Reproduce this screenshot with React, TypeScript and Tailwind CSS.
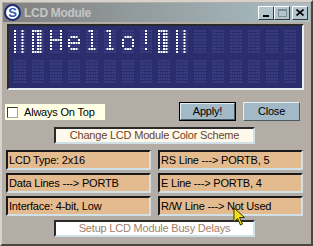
import React from "react";

const G: Record<string, string[]> = {
  A: ["10010", "10010", "10010", "10010", "10010", "10010", "10010", "10010"],
  B: ["11110", "10110", "10110", "10110", "10110", "10110", "10110", "11110"],
  H: ["10001", "10001", "10001", "11111", "10001", "10001", "10001", "00000"],
  e: ["00000", "00000", "01110", "10001", "11111", "10000", "01110", "00000"],
  l: ["01100", "00100", "00100", "00100", "00100", "00100", "01110", "00000"],
  o: ["00000", "00000", "01110", "10001", "10001", "10001", "01110", "00000"],
  "!": ["00100", "00100", "00100", "00100", "00100", "00000", "00100", "00000"],
  " ": ["00000", "00000", "00000", "00000", "00000", "00000", "00000", "00000"],
};

const ROW1 = "ABHello!BA      ";
const ROW2 = "                ";

function Lcd() {
  const dots: React.ReactElement[] = [];
  [ROW1, ROW2].forEach((row, r) => {
    for (let c = 0; c < 16; c++) {
      const g = G[row[c]] || G[" "];
      const ox = 5 + c * 18;
      const oy = 4 + r * 30;
      for (let y = 0; y < 8; y++) {
        for (let x = 0; x < 5; x++) {
          const on = g[y][x] === "1";
          dots.push(
            <rect
              key={`${r}-${c}-${x}-${y}`}
              x={ox + x * 2.5}
              y={oy + y * 3}
              width={2}
              height={2}
              fill={on ? "#ffffff" : "#383d82"}
            />
          );
        }
      }
    }
  });
  return (
    <svg width="293" height="62" viewBox="0 0 293 62" className="block">
      <rect width="293" height="62" fill="#2b2e6d" />
      {dots}
    </svg>
  );
}

function Field({ children }: { children: React.ReactNode }) {
  return (
    <div className="h-[20px] flex items-center bg-[#e4ba8f] border-2 border-t-[#1a1a1a] border-l-[#1a1a1a] border-b-[#cfe0e6] border-r-[#cfe0e6] pl-[1px] text-black leading-none">
      {children}
    </div>
  );
}

export default function App() {
  return (
    <div
      className="w-[313px] h-[246px] overflow-hidden relative bg-[#b4ada5] border-2 border-t-[#d8d2cc] border-l-[#d8d2cc] border-r-[#4a4642] border-b-[#4a4642] flex flex-col text-[11px] tracking-[-0.2px]"
      style={{ fontFamily: '"Liberation Sans", Arial, sans-serif' }}
    >
      {/* title bar */}
      <div className="mx-[1px] mt-[1px] h-[19px] flex items-center bg-gradient-to-r from-[#7f7f7f] to-[#aac0c5]">
        <div className="ml-[1px] w-[17px] h-[17px] rounded-full bg-white border-2 border-[#1c2a6e] flex items-center justify-center text-[#2a56b8] font-bold text-[13px] leading-none">
          S
        </div>
        <div className="ml-[3px] text-[#c6c6c6] font-bold text-[12px] tracking-[-0.3px]">LCD Module</div>
        <div className="ml-auto flex items-center mr-[2px]">
          <div className="w-[16px] h-[14px] bg-[#b3c6cd] border border-t-white border-l-white border-r-[#3a3a3a] border-b-[#3a3a3a] flex items-end justify-center pb-[2px]">
            <div className="w-[6px] h-[2px] bg-black" />
          </div>
          <div className="w-[16px] h-[14px] bg-[#b3c6cd] border border-t-white border-l-white border-r-[#3a3a3a] border-b-[#3a3a3a] flex items-center justify-center">
            <div className="w-[9px] h-[8px] border border-[#7d8d94] border-t-2" />
          </div>
          <div className="ml-[2px] w-[16px] h-[14px] bg-[#b3c6cd] border border-t-white border-l-white border-r-[#3a3a3a] border-b-[#3a3a3a] flex items-center justify-center">
            <svg width="8" height="7" viewBox="0 0 8 7">
              <path d="M0.5 0.5 L7.5 6.5 M7.5 0.5 L0.5 6.5" stroke="#000" strokeWidth="1.6" />
            </svg>
          </div>
        </div>
      </div>

      {/* LCD */}
      <div className="mt-[2px] ml-[5px] w-[297px] border-2 border-t-[#2a2a2a] border-l-[#2a2a2a] border-r-[#e8f0f4] border-b-[#e8f0f4]">
        <Lcd />
      </div>

      {/* checkbox + buttons */}
      <div className="mt-[12px] flex items-start">
        <div className="mt-[2px] ml-[3px] w-[100px] h-[16px] bg-[#ffffe6] flex items-center">
          <div className="ml-[2px] w-[11px] h-[11px] bg-white border border-[#3a3a3a] border-b-[#9aa] border-r-[#9aa]" />
          <span className="ml-[6px]">Always On Top</span>
        </div>
        <div className="ml-[74px] w-[57px] h-[19px] border border-black">
          <div className="w-full h-full bg-[#a2b9c7] border border-t-[#e6f0f4] border-l-[#e6f0f4] border-r-[#4a5a64] border-b-[#4a5a64] flex items-center justify-center text-black">
            Apply!
          </div>
        </div>
        <div className="ml-[7px] w-[57px] h-[19px] bg-[#a2b9c7] border border-t-[#e6f0f4] border-l-[#e6f0f4] border-r-[#4a5a64] border-b-[#4a5a64] flex items-center justify-center text-black">
          Close
        </div>
      </div>

      {/* color scheme */}
      <div className="mt-[6px] ml-[52px] w-[201px] h-[17px] bg-[#fff8ec] border-2 border-t-[#2a2a2a] border-l-[#2a2a2a] border-r-[#cfe0e6] border-b-[#cfe0e6] flex items-center justify-center text-[#6a4424]">
        Change LCD Module Color Scheme
      </div>

      {/* fields */}
      <div className="mt-[6px] ml-[4px] w-[297px] grid grid-cols-2 gap-x-[7px] gap-y-[3px]">
        <Field>LCD Type: 2x16</Field>
        <Field>RS Line ---&gt; PORTB, 5</Field>
        <Field>Data Lines ---&gt; PORTB</Field>
        <Field>E Line ---&gt; PORTB, 4</Field>
        <Field>Interface: 4-bit, Low</Field>
        <Field>R/W Line ---&gt; Not Used</Field>
      </div>

      {/* busy delays */}
      <div className="mt-[4px] ml-[52px] w-[201px] h-[17px] bg-white border-2 border-t-[#2a2a2a] border-l-[#2a2a2a] border-r-[#cfe0e6] border-b-[#cfe0e6] flex items-center justify-center text-[#a08068]">
        Setup LCD Module Busy Delays
      </div>

      {/* cursor */}
      <svg className="absolute left-[231px] top-[205px]" width="14" height="20" viewBox="0 0 14 20">
        <path d="M1 1 L1 15 L4.5 11.5 L7.5 18 L9.5 17 L6.5 10.5 L11.5 10.5 Z" fill="#f2e21a" stroke="#3a3200" strokeWidth="1" />
      </svg>
    </div>
  );
}
